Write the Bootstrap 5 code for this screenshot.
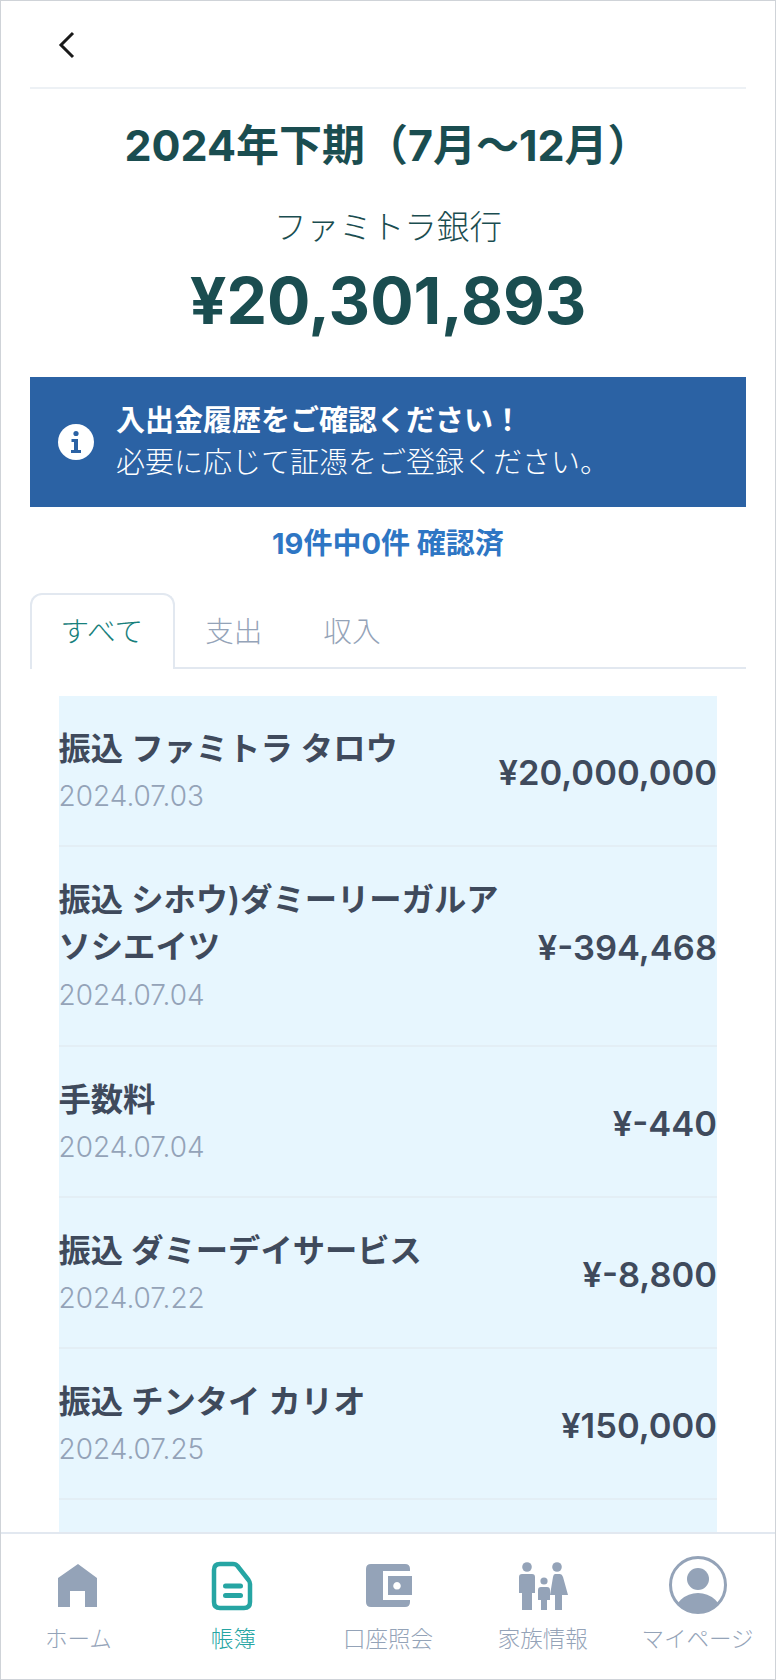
<!DOCTYPE html>
<html lang="ja">
<head>
<meta charset="utf-8">
<title>帳簿</title>
<link href="https://cdn.jsdelivr.net/npm/bootstrap@5.3.0/dist/css/bootstrap.min.css" rel="stylesheet">
<style>
html,body{height:100%;margin:0;overflow:hidden;background:#fff}
body{font-family:Inter,"Noto Sans CJK JP",sans-serif}
.phone{height:1680px;width:776px;border:1px solid #cfd3d8;display:flex;flex-direction:column;overflow:hidden;background:#fff}
.scroller{flex:1 1 auto;min-height:0;overflow:hidden;padding:0 29px}
.topbar{height:88px;border-bottom:2px solid #edf1f5;padding-left:28px;padding-top:30px}
.topbar svg{display:block}
.period{font-size:43px;font-weight:700;line-height:60px;color:#1a4d50;margin:26px 0 0 -1px}
.bankname{font-size:32.6px;font-weight:300;line-height:48px;color:#1a4d50;margin-top:28px}
.total{font-size:64.4px;font-weight:700;line-height:72px;color:#1a4d50;margin-top:14px}
.notice{margin-top:40px;height:130px;background:#2b62a4;color:#fff;padding-left:28px;gap:22px;font-size:29px;line-height:42px}
.notice b{font-weight:700;display:block}
.notice span{font-weight:300}
.progress-line{font-size:29px;font-weight:700;color:#2e76c4;line-height:42px;margin-top:16px}
.tabbar{margin-top:28px;border-bottom:2px solid #e2e8f0;height:76px}
.tabbar .nav-link{font-size:28.600px;font-weight:300;line-height:42px;padding:17px 29.500px 0;color:#94a3b8;border:1px solid transparent;border-bottom:0;margin:0;background:none;height:76px}
.tabbar .nav-link.active{color:#17807c;background:#fff;border:2px solid #e2e8f0;border-bottom:0;border-top-left-radius:12px;border-top-right-radius:12px;padding:16px 29.500px 0 28.500px;height:76px}
.entries{margin:27px 29px 0 28.500px;border-radius:0;background:#e7f6fe}
.entries .list-group-item{background:transparent;border:0;border-bottom:2px solid #e3eef5;padding:29px 0 25.200px;color:#3f4a5c;gap:8px}
.entries .list-group-item.two-line{padding-bottom:26.800px}
.entry-name{font-size:32.300px;font-weight:600;line-height:47.400px}
.entry-date{font-size:28px;font-weight:300;line-height:45.400px;padding-top:2px;color:#94a3b8}
.entry-amt{font-size:34.500px;font-weight:600;white-space:nowrap;padding-top:1px}
.tabsbottom{flex:0 0 auto;height:147px;border-top:2px solid #e2e8f0;background:#fff}
.tabitem{flex:1 1 0;padding-top:22px;font-size:22.500px;font-weight:300;line-height:46px;color:#94a3b8;text-align:center;white-space:nowrap}
.tabitem svg{display:block;margin:0 auto}
.tabitem.on{color:#26a5a3}
</style>
</head>
<body>
<div class="phone">
  <div class="scroller">
    <div class="topbar">
      <svg width="18" height="28" viewBox="0 0 18 28"><path d="M15 2 3 14l12 12" fill="none" stroke="#1a1a1a" stroke-width="3"/></svg>
    </div>
    <h1 class="period text-center">2024年下期（7月〜12月）</h1>
    <div class="bankname text-center">ファミトラ銀行</div>
    <div class="total text-center">¥20,301,893</div>
    <div class="notice d-flex align-items-center">
      <svg width="36" height="36" viewBox="0 0 36 36" class="flex-shrink-0"><circle cx="18" cy="18" r="18" fill="#fff"/><circle cx="18" cy="9.500" r="2.600" fill="#2b62a4"/><path d="M13.500 15h6.500v11h3v3H13v-3h3v-8h-2.500z" fill="#2b62a4"/></svg>
      <div><b>入出金履歴をご確認ください！</b><span>必要に応じて証憑をご登録ください。</span></div>
    </div>
    <div class="progress-line text-center">19件中0件 確認済</div>
    <ul class="nav tabbar flex-nowrap">
      <li class="nav-item"><a class="nav-link active" href="#">すべて</a></li>
      <li class="nav-item"><a class="nav-link" href="#">支出</a></li>
      <li class="nav-item"><a class="nav-link" href="#">収入</a></li>
    </ul>
    <div class="list-group list-group-flush entries">
      <div class="list-group-item d-flex justify-content-between align-items-center"><div><div class="entry-name">振込 ファミトラ タロウ</div><div class="entry-date">2024.07.03</div></div><div class="entry-amt">¥20,000,000</div></div>
      <div class="list-group-item two-line d-flex justify-content-between align-items-center"><div><div class="entry-name">振込 シホウ)ダミーリーガルア<br>ソシエイツ</div><div class="entry-date">2024.07.04</div></div><div class="entry-amt">¥-394,468</div></div>
      <div class="list-group-item d-flex justify-content-between align-items-center"><div><div class="entry-name">手数料</div><div class="entry-date">2024.07.04</div></div><div class="entry-amt">¥-440</div></div>
      <div class="list-group-item d-flex justify-content-between align-items-center"><div><div class="entry-name">振込 ダミーデイサービス</div><div class="entry-date">2024.07.22</div></div><div class="entry-amt">¥-8,800</div></div>
      <div class="list-group-item d-flex justify-content-between align-items-center"><div><div class="entry-name">振込 チンタイ カリオ</div><div class="entry-date">2024.07.25</div></div><div class="entry-amt">¥150,000</div></div>
      <div class="list-group-item py-5"><div class="entry-name">&nbsp;</div><div class="entry-date">&nbsp;</div></div>
    </div>
  </div>
  <nav class="tabsbottom d-flex">
    <div class="tabitem"><svg width="60" height="60" viewBox="48 1556 60 60"><path fill="#94a3b8" d="M78 1564 97 1578v29H85v-16H70v16H58v-29z"/></svg>ホーム</div>
    <div class="tabitem on"><svg width="60" height="60" viewBox="203 1556 60 60"><path fill="none" stroke="#26a5a3" stroke-width="4.500" stroke-linejoin="round" d="M220 1564h13q3 0 4.500 2l11 14q1.500 2 1.500 4v18q0 6-6 6h-24q-6 0-6-6v-32q0-6 6-6z"/><rect x="223" y="1583.500" width="20" height="5" rx="2.500" fill="#26a5a3"/><rect x="223" y="1593" width="20" height="5" rx="2.500" fill="#26a5a3"/></svg>帳簿</div>
    <div class="tabitem"><svg width="60" height="60" viewBox="358 1556 60 60"><path fill="#94a3b8" d="M371 1564h34q5 0 5 5v2h-27v29h27v2q0 5-5 5h-34q-5 0-5-5v-33q0-5 5-5z"/><path fill="#94a3b8" fill-rule="evenodd" d="M388 1576h24v19h-24zM397 1582a3.800 3.800 0 1 0 .01 0z"/></svg>口座照会</div>
    <div class="tabitem"><svg width="60" height="60" viewBox="513 1556 60 60"><g fill="#94a3b8"><circle cx="527" cy="1567" r="4.800"/><circle cx="557" cy="1567" r="4.800"/><circle cx="544" cy="1581" r="3.600"/><path d="M522 1574h10q3 0 3 3v16h-3v17h-10v-17h-3v-16q0-3 3-3z"/><path d="M541 1587h6q3 0 3 3v10h-3v10h-6v-10h-3v-10q0-3 3-3z"/><path d="M555 1574h5q2 0 3 3l5 18h-6v15h-7v-15h-5l3-18q.500-3 2-3z"/></g></svg>家族情報</div>
    <div class="tabitem"><svg width="60" height="60" viewBox="668 1556 60 60"><defs><clipPath id="pc"><circle cx="698" cy="1585" r="27.500"/></clipPath></defs><circle cx="698" cy="1585" r="27.500" fill="none" stroke="#94a3b8" stroke-width="3"/><circle cx="698" cy="1579" r="11" fill="#94a3b8"/><ellipse cx="698" cy="1615" rx="24" ry="22" fill="#94a3b8" clip-path="url(#pc)"/></svg>マイページ</div>
  </nav>
</div>
<script src="https://cdn.jsdelivr.net/npm/bootstrap@5.3.0/dist/js/bootstrap.bundle.min.js"></script>
</body>
</html>
